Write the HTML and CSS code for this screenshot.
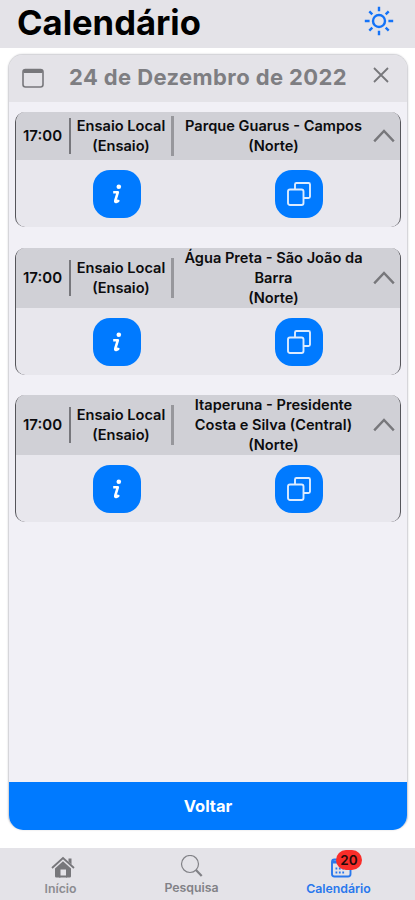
FILE: index.html
```
<!DOCTYPE html>
<html lang="pt-BR">
<head>
  <meta charset="UTF-8" />
  <meta name="viewport" content="width=device-width, initial-scale=1.0" />
  <title>Calendário</title>
  <link rel="stylesheet" href="styles.css">
</head>
<body>
  <svg class="sprite" width="0" height="0">
    <symbol id="chevron" viewBox="0 0 22 14">
      <path d="M1.2 12.400 11 2l9.800 10.400" fill="none" stroke="currentColor" stroke-width="2.400" />
    </symbol>
    <symbol id="copy" viewBox="0 0 24 24">
      <path d="M8 7.500V2.500a1.500 1.500 0 0 1 1.500-1.500h12a1.500 1.500 0 0 1 1.500 1.500v12a1.500 1.500 0 0 1-1.500 1.500h-4.500" fill="none" stroke="currentColor" stroke-width="1.900" />
      <rect x="1" y="7.500" width="15.500" height="15.500" rx="2" fill="none" stroke="currentColor" stroke-width="1.900" />
    </symbol>
    <symbol id="info" viewBox="0 0 14 20">
      <circle cx="8.800" cy="2.800" r="2.300" fill="currentColor" />
      <path d="M3.200 8.300h4.600L5.400 16.200q-.700 2.300 1.200 1.600 1.400-.500 2.200-1.800" fill="none" stroke="currentColor" stroke-width="2.600" stroke-linejoin="round" />
    </symbol>
  </svg>

  <header class="topbar">
    <h1>Calendário</h1>
    <svg class="sun" viewBox="0 0 30 30" fill="none" stroke="currentColor" stroke-width="2.400">
      <circle cx="15" cy="15" r="6" />
      <path d="M15 .800v4.400M15 24.800v4.400M.800 15h4.800M24.400 15h4.800M5.300 5.300l3 3M21.700 21.700l3 3M24.700 5.300l-3 3M8.300 21.700l-3 3" />
    </svg>
  </header>

  <main class="modal">
    <div class="modal-header">
      <svg class="cal-icon" viewBox="0 0 22 20" fill="none" stroke="currentColor">
        <rect x="1" y="1.500" width="20" height="17.500" rx="2.500" stroke-width="1.600" />
        <path d="M1.500 3.500h19" stroke-width="3" />
      </svg>
      <h2>24 de Dezembro de 2022</h2>
      <svg class="close" viewBox="0 0 16 16"><path d="M1 1l14 14M15 1 1 15" stroke="currentColor" stroke-width="1.800" /></svg>
    </div>

    <div class="list">
      <section class="event">
        <div class="event-head">
          <div class="time">17:00</div>
          <div class="type">Ensaio Local<br>(Ensaio)</div>
          <div class="place">Parque Guarus - Campos<br>(Norte)</div>
          <svg class="chevron"><use href="#chevron" /></svg>
        </div>
        <div class="actions">
          <button><svg class="info"><use href="#info" /></svg></button>
          <button><svg class="copy"><use href="#copy" /></svg></button>
        </div>
      </section>

      <section class="event tall">
        <div class="event-head">
          <div class="time">17:00</div>
          <div class="type">Ensaio Local<br>(Ensaio)</div>
          <div class="place">Água Preta - São João da<br>Barra<br>(Norte)</div>
          <svg class="chevron"><use href="#chevron" /></svg>
        </div>
        <div class="actions">
          <button><svg class="info"><use href="#info" /></svg></button>
          <button><svg class="copy"><use href="#copy" /></svg></button>
        </div>
      </section>

      <section class="event tall">
        <div class="event-head">
          <div class="time">17:00</div>
          <div class="type">Ensaio Local<br>(Ensaio)</div>
          <div class="place">Itaperuna - Presidente<br>Costa e Silva (Central)<br>(Norte)</div>
          <svg class="chevron"><use href="#chevron" /></svg>
        </div>
        <div class="actions">
          <button><svg class="info"><use href="#info" /></svg></button>
          <button><svg class="copy"><use href="#copy" /></svg></button>
        </div>
      </section>
    </div>

    <button class="back">Voltar</button>
  </main>

  <nav class="tabs">
    <a class="tab home">
      <svg viewBox="0 0 24 22">
        <path d="M1 12 12 2l11 10" fill="none" stroke="currentColor" stroke-width="1.800" />
        <path d="M17.500 2.500h3v6l-3-2.700zM4 12.500l8-7.200 8 7.200v7.700a1.300 1.300 0 0 1-1.300 1.300H15v-8H9.500v8H5.300A1.300 1.300 0 0 1 4 20.200z" fill="currentColor" />
        <path d="M8 20.500h8" stroke="currentColor" stroke-width="2" />
      </svg>
      <span>Início</span>
    </a>
    <a class="tab search">
      <svg viewBox="0 0 24 22" fill="none" stroke="currentColor">
        <circle cx="10" cy="9" r="8.500" stroke-width="1.200" />
        <path d="m16 15 5.700 6" stroke-width="2.200" />
      </svg>
      <span>Pesquisa</span>
    </a>
    <a class="tab calendar">
      <svg viewBox="0 0 24 22" fill="none" stroke="currentColor">
        <rect x="3" y="3.500" width="18.500" height="17" rx="2.500" stroke-width="1.900" />
        <path d="M3.500 6h17.500" stroke-width="3" />
        <path d="M6.500 12.500h12M6.500 16.500h9" stroke-width="1.800" stroke-dasharray="1.800 1.600" />
      </svg>
      <b class="badge">20</b>
      <span>Calendário</span>
    </a>
  </nav>
</body>
</html>
```
FILE: styles.css
```
* {
  box-sizing: border-box;
}
body {
  margin: 0;
  height: 900px;
  display: flex;
  flex-direction: column;
  background: #fff;
  font-family: Inter, "Liberation Sans", sans-serif;
  color: #0c0c0e;
  overflow: hidden;
}
.sprite {
  position: absolute;
}
h1, h2 {
  margin: 0;
}
.topbar {
  height: 48px;
  padding: 0 21px 5px 17px;
  display: flex;
  align-items: center;
  justify-content: space-between;
  background: #e4e3e8;
}
h1 {
  font-size: 34.600px;
  line-height: 42px;
  font-weight: 700;
  color: #000;
}
.sun {
  width: 30px;
  height: 30px;
  margin-top: -2px;
  color: #1473f8;
}
.modal {
  width: 400px;
  height: 776px;
  margin: 6px 0 0 8px;
  display: flex;
  flex-direction: column;
  border: 1px solid #d6d6da;
  border-bottom: 0;
  border-radius: 15px;
  background: #f1f0f6;
  overflow: hidden;
  box-shadow: 0 0 2px #d2d2d6;
}
.modal-header {
  flex: none;
  height: 47px;
  padding: 0 18px 0 13px;
  display: flex;
  align-items: center;
  background: #e4e3e8;
  color: #77777b;
}
h2 {
  margin: -3px 0 0 25px;
  font-size: 22px;
  letter-spacing: 0.400px;
  font-weight: 700;
  color: #7e7e82;
}
.cal-icon {
  width: 22px;
  height: 20px;
  margin-top: -2px;
}
.close {
  width: 16px;
  height: 16px;
  margin: -7px 0 0 auto;
}
.list {
  flex: 1;
  padding: 10px 6px;
  display: flex;
  flex-direction: column;
  gap: 21px;
}
.event {
  height: 115px;
  border: solid #55555a;
  border-width: 0 1px;
  border-radius: 10px;
  background: #e8e7ed;
  overflow: hidden;
}
.event.tall {
  height: 127px;
}
.event-head {
  height: 48px;
  display: grid;
  grid-template-columns: 55px 103px 199px 1fr;
  align-items: center;
  background: #d0d0d6;
  font-size: 14.600px;
  line-height: 20px;
  font-weight: 600;
  text-align: center;
}
.event.tall + .event.tall {
  margin-top: -1px;
}
.tall .event-head {
  height: 60px;
}
.time {
  height: 36px;
  line-height: 36px;
  font-size: 15px;
  border-right: 2px solid #77777c;
}
.type {
  border-right: 3px solid #97979c;
}
.place {
  white-space: nowrap;
}
.chevron {
  width: 22px;
  height: 14px;
  color: #77777b;
}
.actions {
  height: 68px;
  padding: 0 77px;
  display: flex;
  align-items: center;
  justify-content: space-between;
}
button {
  border: 0;
  padding: 0;
  background: #007aff;
  color: #fff;
  font-family: inherit;
}
.actions button {
  width: 48px;
  height: 48px;
  display: flex;
  align-items: center;
  justify-content: center;
  border-radius: 17px;
}
.info {
  width: 14px;
  height: 20px;
}
.copy {
  width: 24px;
  height: 24px;
  color: #dcebff;
}
.back {
  flex: none;
  height: 48px;
  font-size: 16.500px;
  font-weight: 700;
}
.tabs {
  height: 52px;
  margin-top: 18px;
  padding: 0;
  display: grid;
  grid-template-columns: 121px 141px 1fr;
  background: #e4e3e8;
  color: #818186;
}
.tab {
  position: relative;
  padding-top: 8px;
  display: flex;
  flex-direction: column;
  align-items: center;
  font-size: 12.300px;
  line-height: 14px;
  font-weight: 600;
}
.tab svg {
  width: 24px;
  height: 22px;
  margin-bottom: 4px;
}
.tab.search {
  padding-top: 7px;
}
.home {
  color: #77777b;
}
.home svg {
  margin-left: 4px;
}
.home span {
  color: #8c8c91;
}
.calendar {
  color: #2878ed;
}
.calendar svg {
  margin-left: 5px;
}
.badge {
  position: absolute;
  top: 2px;
  left: 74px;
  width: 26px;
  height: 20px;
  border-radius: 10px;
  background: #f92d29;
  color: #260a0a;
  font-size: 13.500px;
  line-height: 20px;
  font-weight: 600;
  text-align: center;
}
```
